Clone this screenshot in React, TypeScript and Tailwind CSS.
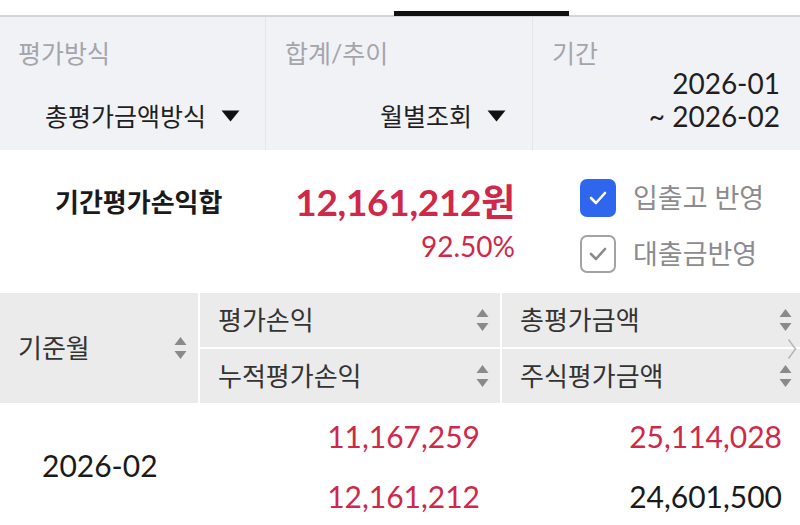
const SortIcon = () => (
  <svg width="13" height="24" viewBox="0 0 13 24" className="shrink-0">
    <path d="M6.5 1 L12.5 9 L0.5 9 Z" fill="#8a8a8a" />
    <path d="M0.5 15 L12.5 15 L6.5 23 Z" fill="#8a8a8a" />
  </svg>
);

const Caret = () => (
  <svg width="19" height="12" viewBox="0 0 19 12" className="ml-[15px] shrink-0">
    <path d="M0.5 0.5 L18.5 0.5 L9.5 11.5 Z" fill="#111" />
  </svg>
);

const Check = ({ color }: { color: string }) => (
  <svg width="18" height="14" viewBox="0 0 18 14">
    <path d="M2 7 L7 12 L16 2" fill="none" stroke={color} strokeWidth="2.6" strokeLinecap="round" strokeLinejoin="round" />
  </svg>
);

export default function App() {
  return (
    <div className="w-[800px] h-[525px] overflow-hidden bg-white font-['Lato','Noto_Sans_CJK_KR',sans-serif]">
      {/* tab line */}
      <div className="h-[17px] relative border-b-[2px] border-[#d4d4d6]">
        <div className="absolute left-[394px] w-[175px] bottom-[-1px] h-[5px] bg-[#111]" />
      </div>

      {/* filters */}
      <div className="grid grid-cols-[266px_267px_267px] h-[133px] bg-[#f1f2f6]">
        <div className="flex flex-col border-r border-[#e4e5ea] pl-[18px] pr-[25px]">
          <div className="mt-[20px] text-[25px] leading-[32px] text-[#a4a5ab]">평가방식</div>
          <div className="mt-[30px] flex items-center justify-end text-[25px] leading-[34px] text-[#1f1f1f]">
            총평가금액방식
            <Caret />
          </div>
        </div>
        <div className="flex flex-col border-r border-[#e4e5ea] pl-[19px] pr-[26px]">
          <div className="mt-[20px] text-[25px] leading-[32px] text-[#a4a5ab]">합계/추이</div>
          <div className="mt-[30px] flex items-center justify-end text-[25px] leading-[34px] text-[#1f1f1f]">
            월별조회
            <Caret />
          </div>
        </div>
        <div className="flex flex-col pl-[19px] pr-[20px]">
          <div className="mt-[20px] text-[25px] leading-[32px] text-[#a4a5ab]">기간</div>
          <div className="-mt-[2px] text-right text-[28px] leading-[33px] text-[#1f1f1f]">
            2026-01
            <br />~ 2026-02
          </div>
        </div>
      </div>

      {/* summary */}
      <div className="h-[143px] flex">
        <div className="w-[285px] pl-[55px] pt-[35px] text-[26px] leading-[34px] font-bold text-[#1a1a1a]">
          기간평가손익합
        </div>
        <div className="w-[230px] flex flex-col items-end pt-[29px]">
          <div className="text-[37px] leading-[46px] font-bold text-[#d0284a] tracking-[-0.3px]">12,161,212원</div>
          <div className="text-[28px] leading-[32px] text-[#d0284a] mt-[5px]">92.50%</div>
        </div>
        <div className="flex flex-col pl-[65px] pt-[29px] gap-[18px]">
          <div className="flex items-center gap-[17px]">
            <div className="w-[36px] h-[38px] rounded-[7px] bg-[#2f66ee] flex items-center justify-center">
              <Check color="#fff" />
            </div>
            <span className="text-[27px] leading-[34px] text-[#8b8b8f]">입출고 반영</span>
          </div>
          <div className="flex items-center gap-[17px]">
            <div className="w-[36px] h-[38px] rounded-[7px] border-[2px] border-[#a3a3a7] flex items-center justify-center">
              <Check color="#8b8b8f" />
            </div>
            <span className="text-[27px] leading-[34px] text-[#8b8b8f]">대출금반영</span>
          </div>
        </div>
      </div>

      {/* table header */}
      <div className="grid grid-cols-[198px_300px_302px] gap-x-[2px] bg-white h-[110px]">
        <div className="bg-[#ebebeb] flex items-center justify-between pl-[18px] pr-[11px]">
          <span className="text-[26px] text-[#333]">기준월</span>
          <SortIcon />
        </div>
        <div className="flex flex-col gap-y-[2px]">
          <div className="flex-1 bg-[#ebebeb] flex items-center justify-between pl-[18px] pr-[11px]">
            <span className="text-[26px] text-[#333]">평가손익</span>
            <SortIcon />
          </div>
          <div className="flex-1 bg-[#ebebeb] flex items-center justify-between pl-[18px] pr-[11px]">
            <span className="text-[26px] text-[#333]">누적평가손익</span>
            <SortIcon />
          </div>
        </div>
        <div className="flex flex-col gap-y-[2px] relative">
          <div className="flex-1 bg-[#ebebeb] flex items-center justify-between pl-[18px] pr-[12px]">
            <span className="text-[26px] text-[#333]">총평가금액</span>
            <SortIcon />
          </div>
          <div className="flex-1 bg-[#ebebeb] flex items-center justify-between pl-[18px] pr-[12px]">
            <span className="text-[26px] text-[#333]">주식평가금액</span>
            <SortIcon />
          </div>
          <svg width="10" height="22" viewBox="0 0 10 22" className="absolute right-[7px] top-[45px]">
            <path d="M1.5 1.5 L8.5 11 L1.5 20.5" fill="none" stroke="#b8b8b8" strokeWidth="1.6" />
          </svg>
        </div>
      </div>

      {/* table row */}
      <div className="grid grid-cols-[198px_300px_302px] gap-x-[2px] text-[30px] h-[122px]">
        <div className="flex items-center pl-[42px] pt-[3px] text-[#1a1a1a]">2026-02</div>
        <div className="flex flex-col items-end justify-center gap-[22px] pr-[20px] pt-[4px] text-[#d0284a]">
          <span className="leading-[38px]">11,167,259</span>
          <span className="leading-[38px]">12,161,212</span>
        </div>
        <div className="flex flex-col items-end justify-center gap-[22px] pr-[22px] pt-[4px]">
          <span className="leading-[38px] text-[#d0284a]">25,114,028</span>
          <span className="leading-[38px] text-[#1a1a1a]">24,601,500</span>
        </div>
      </div>
    </div>
  );
}
